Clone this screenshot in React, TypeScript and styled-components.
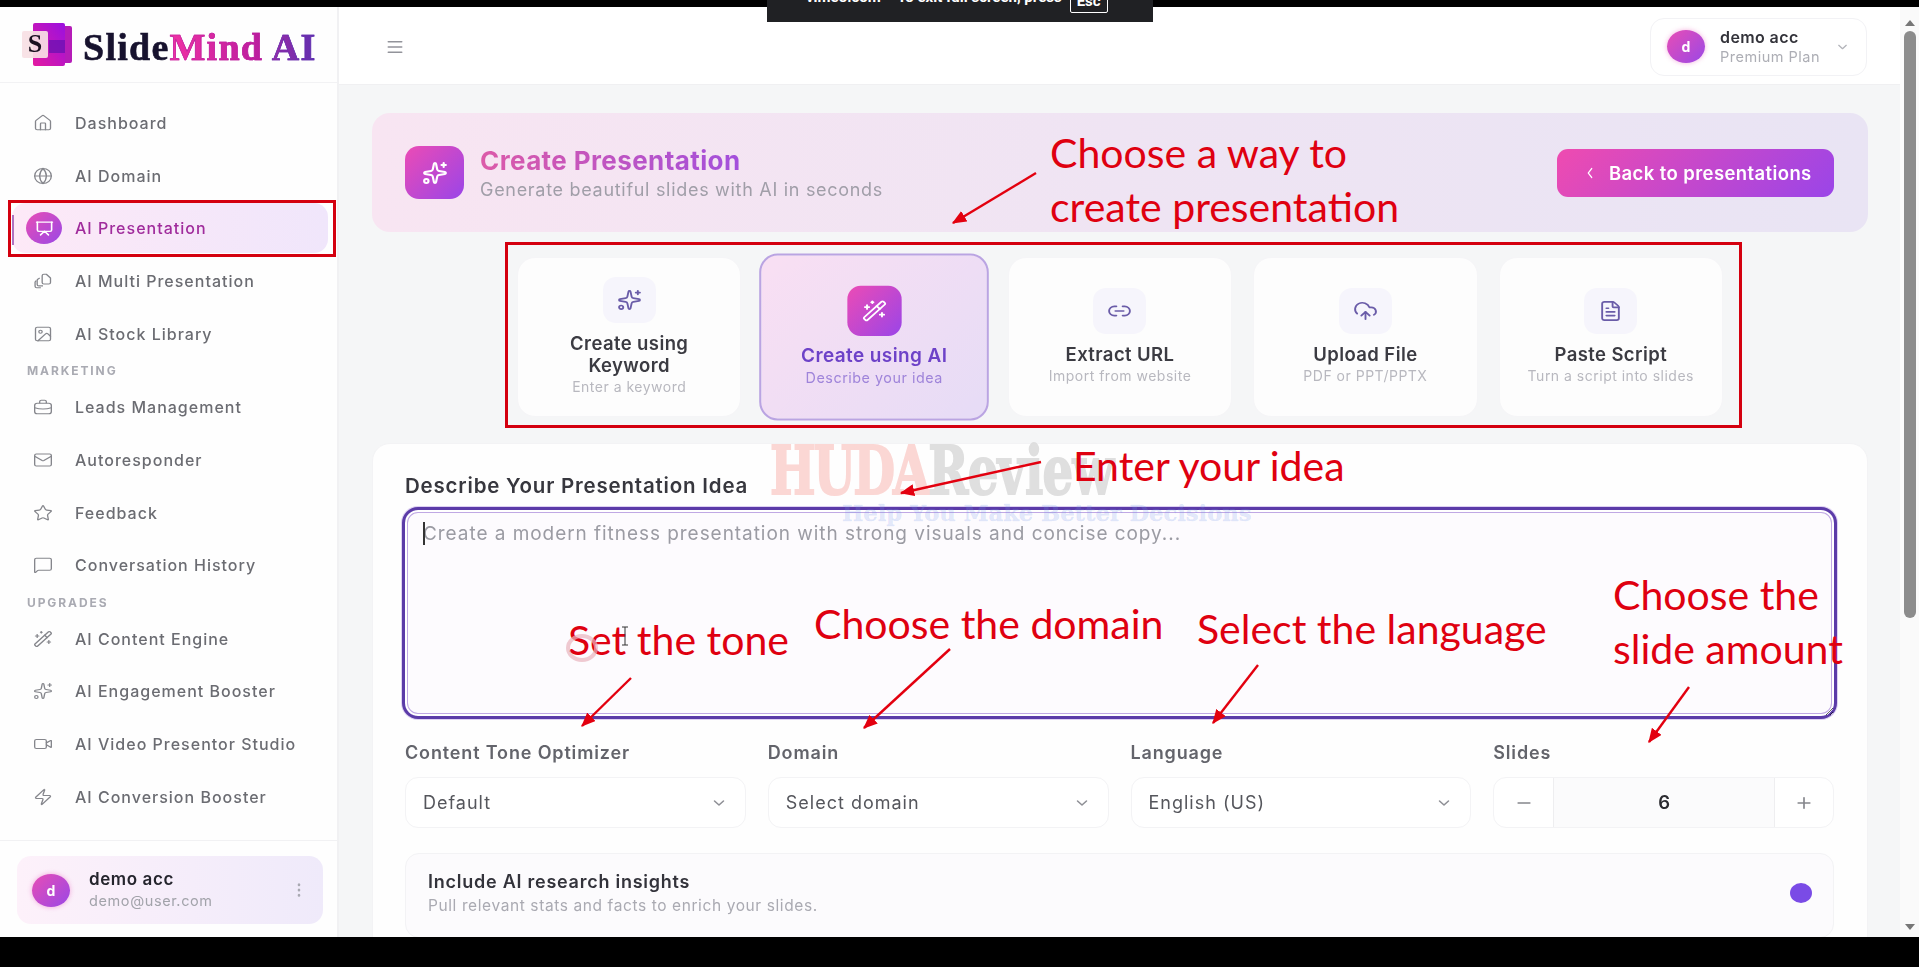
import React from "react";
import styled, { createGlobalStyle } from "styled-components";
import {
  ChevronDown,
  ChevronLeft,
  CloudUpload,
  EllipsisVertical,
  FileText,
  Globe,
  House,
  Image,
  Link2,
  Mail,
  Menu,
  MessageSquare,
  Minus,
  Plus,
  Presentation,
  Sparkles,
  Star,
  Video,
  WandSparkles,
  Zap,
} from "lucide-react";

const GlobalStyle = createGlobalStyle`
  html, body { margin: 0; padding: 0; height: 100%; overflow: hidden; background: #000; }
  * { box-sizing: border-box; }
  body { font-family: Inter, "Open Sans", sans-serif; }
  svg { display: block; }
`;

const Page = styled.div`
  position: relative;
  width: 1919px;
  height: 967px;
  background: #000;
  overflow: hidden;
`;

const Frame = styled.div`
  display: flex;
  width: 100%;
  height: 930px;
  margin-top: 7px;
  background: #fff;
  overflow: hidden;
  filter: blur(0.45px);
`;

const Sidebar = styled.aside`
  flex: 0 0 339px;
  display: flex;
  flex-direction: column;
  background: #fefefe;
  border-right: 2px solid #f1f1f3;
`;

const LogoBar = styled.div`
  height: 76px;
  flex: none;
  display: flex;
  align-items: center;
  gap: 9px;
  padding-left: 22px;
  border-bottom: 1px solid #f2f2f4;
`;

const LogoText = styled.div`
  font-family: "Liberation Serif", serif;
  font-weight: 700;
  font-size: 38px;
  letter-spacing: 1.25px;
  line-height: 1;
  margin-top: 4px;
  color: #17122e;
  white-space: nowrap;
  -webkit-text-stroke: 0.6px #17122e;
`;

const LogoAccent = styled.span<{ $from: string; $to: string }>`
  background: linear-gradient(90deg, ${(p) => p.$from}, ${(p) => p.$to});
  -webkit-background-clip: text;
  background-clip: text;
  color: transparent;
  -webkit-text-stroke: 0.6px ${(p) => p.$to};
`;

const Nav = styled.nav`
  display: flex;
  flex-direction: column;
  gap: 2.7px;
  padding: 15px 9px 0 12px;
`;

const NavItem = styled.div<{ $active?: boolean }>`
  position: relative;
  height: 50px;
  display: flex;
  align-items: center;
  padding-left: ${(p) => (p.$active ? "14px" : "21px")};
  gap: ${(p) => (p.$active ? "13px" : "22px")};
  border-radius: 14px;
  font-size: 16px;
  font-weight: 500;
  letter-spacing: 1px;
  color: ${(p) => (p.$active ? "#a02c9c" : "#6b6c72")};
  background: ${(p) =>
    p.$active ? "linear-gradient(90deg, #fde9f7 0%, #f0e6fb 100%)" : "transparent"};
  &::before {
    content: "";
    display: ${(p) => (p.$active ? "block" : "none")};
    position: absolute;
    left: 0;
    top: 12px;
    bottom: 8px;
    width: 2px;
    background: #b070c0;
  }
`;

const NavGlyph = styled.span`
  width: 20px;
  height: 18px;
  flex: none;
  color: #85868c;
  svg { width: 20px; height: 18px; stroke-width: 1.6; }
`;

const ActiveGlyph = styled.span`
  width: 36px;
  height: 32px;
  flex: none;
  display: flex;
  align-items: center;
  justify-content: center;
  border-radius: 50%;
  color: #fff;
  background: linear-gradient(135deg, #e84db5, #9a48e6);
  svg { width: 19px; height: 17px; stroke-width: 2; }
`;

const SectionLabel = styled.div`
  height: 18px;
  line-height: 20px;
  padding-left: 15px;
  font-size: 12px;
  font-weight: 700;
  letter-spacing: 1.9px;
  color: #a9aab2;
`;

const SideFooter = styled.div`
  margin-top: auto;
  border-top: 1px solid #f1f1f3;
  padding: 15px 14px 13px 17px;
`;

const SideUser = styled.div`
  height: 68px;
  display: flex;
  align-items: center;
  padding: 0 16px 0 15px;
  border-radius: 14px;
  background: linear-gradient(90deg, #fdf1fa 0%, #efeafa 100%);
`;

const Avatar = styled.div`
  width: 38px;
  height: 33px;
  flex: none;
  display: flex;
  align-items: center;
  justify-content: center;
  border-radius: 50%;
  color: #fff;
  font-size: 14px;
  font-weight: 700;
  background: linear-gradient(135deg, #e84db5, #9a48e6);
  box-shadow: 0 0 5px rgba(232, 77, 181, 0.45);
`;

const UserText = styled.div`
  flex: 1;
  margin-left: 19px;
`;

const UserName = styled.div`
  font-size: 17px;
  font-weight: 600;
  letter-spacing: 0.6px;
  line-height: 20px;
  color: #24242c;
`;

const UserMail = styled.div`
  font-size: 14.5px;
  letter-spacing: 0.6px;
  line-height: 20px;
  margin-top: 2px;
  color: #a2a3aa;
`;

const DotsGlyph = styled.span`
  color: #a9a9b2;
  svg { width: 16px; height: 18px; }
`;

const Content = styled.div`
  flex: 1;
  min-width: 0;
  display: flex;
  flex-direction: column;
  background: #f5f6f7;
`;

const Header = styled.header`
  height: 78px;
  flex: none;
  display: flex;
  align-items: center;
  justify-content: space-between;
  padding: 0 33px 0 46px;
  background: #fff;
  border-bottom: 1px solid #f0f0f2;
`;

const HeaderMenu = styled.span`
  color: #92939a;
  margin-top: 2px;
  svg { width: 20px; height: 18px; }
`;

const ProfileChip = styled.div`
  width: 217px;
  height: 58px;
  margin-top: 2px;
  display: flex;
  align-items: center;
  padding: 0 16px;
  background: #fff;
  border: 1px solid #f2f2f5;
  border-radius: 14px;
`;

const ChipText = styled.div`
  flex: 1;
  margin-left: 15px;
`;

const ChipName = styled.div`
  font-size: 16px;
  font-weight: 600;
  line-height: 20px;
  letter-spacing: 0.4px;
  color: #33333a;
`;

const ChipPlan = styled.div`
  font-size: 14.5px;
  line-height: 20px;
  letter-spacing: 0.5px;
  color: #adaeb5;
`;

const ChipArrow = styled.span`
  color: #b3b4ba;
  svg { width: 15px; height: 14px; }
`;

const Main = styled.main`
  flex: 1;
  padding: 28px 32px 0 33px;
`;

const Hero = styled.section`
  height: 119px;
  display: flex;
  align-items: center;
  justify-content: space-between;
  padding: 0 34px 0 33px;
  border-radius: 18px;
  background: linear-gradient(90deg, #f8e5f2 0%, #efe4f3 50%, #e9e4f4 100%);
`;

const HeroLeft = styled.div`
  display: flex;
  align-items: center;
  gap: 16px;
`;

const HeroIcon = styled.div`
  width: 59px;
  height: 53px;
  display: flex;
  align-items: center;
  justify-content: center;
  color: #fff;
  border-radius: 14px;
  background: linear-gradient(135deg, #ec4bb5, #9a45e8);
  svg { width: 26px; height: 24px; }
`;

const HeroTitle = styled.h1`
  margin: 2px 0 0;
  font-size: 26px;
  font-weight: 700;
  letter-spacing: 0.4px;
  line-height: 30px;
  width: max-content;
  background: linear-gradient(90deg, #dc5aa8, #a24fdc);
  -webkit-background-clip: text;
  background-clip: text;
  color: transparent;
`;

const HeroSub = styled.p`
  margin: 0;
  padding-top: 2px;
  font-size: 18px;
  letter-spacing: 0.7px;
  line-height: 24px;
  color: #a09ea8;
`;

const BackButton = styled.button`
  width: 277px;
  height: 48px;
  display: flex;
  align-items: center;
  gap: 12px;
  padding: 0 0 0 26px;
  border: 0;
  border-radius: 11px;
  color: #fff;
  font-family: inherit;
  font-size: 18.5px;
  font-weight: 600;
  letter-spacing: 0.4px;
  background: linear-gradient(135deg, #ef4bb0, #9a45e8);
  svg { width: 14px; height: 18px; }
`;

const Methods = styled.div`
  display: grid;
  grid-template-columns: repeat(5, 1fr);
  gap: 21px;
  height: 160px;
  margin: 25px 145px 0;
`;

const MethodCard = styled.div<{ $active?: boolean }>`
  display: flex;
  flex-direction: column;
  align-items: center;
  justify-content: center;
  border-radius: 18px;
  background: ${(p) =>
    p.$active ? "linear-gradient(135deg, #f9dff3 0%, #e6dcf6 100%)" : "#fdfdfd"};
  border: ${(p) => (p.$active ? "2px solid #baa4e2" : "1px solid #f5f5f7")};
  transform: ${(p) => (p.$active ? "scale(1.025, 1.045)" : "none")};
`;

const MethodTile = styled.div<{ $active?: boolean }>`
  width: 53px;
  height: ${(p) => (p.$active ? "48px" : "46px")};
  display: flex;
  align-items: center;
  justify-content: center;
  border-radius: 13px;
  color: ${(p) => (p.$active ? "#fff" : "#6a5ca8")};
  background: ${(p) =>
    p.$active ? "linear-gradient(135deg, #ec4bb5, #9a45e8)" : "#f6f5fc"};
  svg { width: 25px; height: 22px; stroke-width: 1.8; }
`;

const MethodTitle = styled.div<{ $active?: boolean }>`
  margin-top: ${(p) => (p.$active ? "7px" : "9px")};
  text-align: center;
  font-size: 18.5px;
  font-weight: 600;
  line-height: 22px;
  letter-spacing: 0.4px;
  color: ${(p) => (p.$active ? "#6d42c8" : "#3b3b42")};
`;

const MethodSub = styled.div<{ $active?: boolean }>`
  margin-top: 1px;
  text-align: center;
  font-size: 14px;
  line-height: 20px;
  letter-spacing: 0.5px;
  color: ${(p) => (p.$active ? "#9f84da" : "#b8b8bf")};
`;

const FormCard = styled.section`
  margin-top: 26px;
  height: 520px;
  padding: 30px 33px 0 32px;
  background: #fefefe;
  border-radius: 18px 18px 0 0;
  border: 1px solid #f3f3f5;
`;

const FormTitle = styled.h2`
  margin: 0;
  font-size: 20.5px;
  font-weight: 600;
  line-height: 24px;
  letter-spacing: 0.8px;
  color: #37373e;
`;

const IdeaWrap = styled.div`
  position: relative;
  margin: 9px -3px 0;
  height: 212px;
`;

const IdeaInput = styled.textarea`
  display: block;
  width: 100%;
  height: 100%;
  padding: 12px 18px;
  border: 3px solid #5b3ba8;
  border-radius: 16px;
  outline: none;
  background: #fdfbfe;
  box-shadow: 0 0 0 1px #ddd0f2, inset 0 0 0 2px #fff, inset 0 0 0 3px #c0a8e4;
  font-family: inherit;
  font-size: 19px;
  letter-spacing: 0.95px;
  line-height: 24px;
  &::placeholder { color: #9b9ba3; opacity: 1; }
`;

const Caret = styled.span`
  position: absolute;
  left: 21px;
  top: 15px;
  width: 1.5px;
  height: 23px;
  background: #333;
`;

const Fields = styled.div`
  display: grid;
  grid-template-columns: repeat(4, 1fr);
  gap: 22px;
  margin-top: 22px;
`;

const FieldLabel = styled.div`
  font-size: 18px;
  font-weight: 600;
  line-height: 24px;
  letter-spacing: 0.85px;
  color: #63646b;
`;

const SelectBox = styled.div`
  height: 51px;
  margin-top: 12px;
  display: flex;
  align-items: center;
  justify-content: space-between;
  padding: 0 17px;
  background: #fff;
  border: 1px solid #f3f3f5;
  border-radius: 13px;
  font-size: 18px;
  letter-spacing: 1px;
  line-height: 47px;
  color: #55565c;
  svg { width: 18px; height: 16px; color: #8e8f95; }
`;

const Stepper = styled.div`
  height: 51px;
  margin-top: 12px;
  display: grid;
  grid-template-columns: 59px 1fr 58px;
  border: 1px solid #f3f3f5;
  border-radius: 13px;
  overflow: hidden;
  background: #fff;
`;

const StepButton = styled.div`
  display: flex;
  align-items: center;
  justify-content: center;
  color: #85868c;
  svg { width: 20px; height: 18px; }
`;

const StepValue = styled.div`
  display: flex;
  align-items: center;
  justify-content: center;
  background: #fbfbfc;
  border-left: 1px solid #eeeef0;
  border-right: 1px solid #eeeef0;
  font-size: 18.5px;
  font-weight: 600;
  line-height: 47px;
  color: #2b2b30;
`;

const InsightRow = styled.div`
  height: 85px;
  margin-top: 25px;
  display: flex;
  align-items: center;
  justify-content: space-between;
  padding: 0 21px 4px 22px;
  background: #fcfbfd;
  border: 1px solid #f3f3f5;
  border-radius: 14px;
`;

const InsightTitle = styled.div`
  font-size: 18px;
  font-weight: 600;
  line-height: 24px;
  letter-spacing: 0.75px;
  color: #33333b;
`;

const InsightSub = styled.div`
  margin-top: 1px;
  font-size: 15.5px;
  line-height: 22px;
  letter-spacing: 0.6px;
  color: #aaaab2;
`;

const SwitchDot = styled.div`
  width: 22px;
  height: 20px;
  margin-bottom: 2px;
  border-radius: 50%;
  background: #7a4be6;
`;

const ScrollRail = styled.div`
  flex: 0 0 19px;
  display: flex;
  flex-direction: column;
  align-items: center;
  background: #fafafa;
`;

const ArrowUp = styled.div`
  margin-top: 13px;
  border-left: 5px solid transparent;
  border-right: 5px solid transparent;
  border-bottom: 6px solid #777;
`;

const ArrowDown = styled.div`
  margin-top: auto;
  margin-bottom: 7px;
  border-left: 5px solid transparent;
  border-right: 5px solid transparent;
  border-top: 6px solid #777;
`;

const Thumb = styled.div`
  width: 12px;
  height: 587px;
  margin-top: 5px;
  border-radius: 6px;
  background: #8c8c8c;
`;

const Toast = styled.div`
  position: absolute;
  left: 767px;
  top: 0;
  width: 386px;
  height: 22px;
  display: flex;
  gap: 8px;
  justify-content: flex-start;
  padding-left: 39px;
  overflow: hidden;
  background: #202124;
  color: #fff;
  font-family: Roboto, sans-serif;
  font-size: 15px;
  font-weight: 700;
  white-space: nowrap;
`;

const ToastText = styled.span`
  margin-top: -12px;
`;

const EscKey = styled.span`
  margin-top: -6px;
  height: 19px;
  padding: 0 6px;
  line-height: 12px;
  border: 1px solid #fff;
  border-radius: 2px;
`;

const Watermark = styled.div`
  position: absolute;
  left: 770px;
  top: 432px;
  font-family: "DejaVu Serif", serif;
  font-weight: 700;
  font-size: 67px;
  line-height: 78px;
  letter-spacing: -1px;
  white-space: nowrap;
  color: #dcdcdc;
  -webkit-text-stroke: 2px #dcdcdc;
  opacity: 0.9;
  transform: scaleX(0.72);
  transform-origin: left center;
  pointer-events: none;
`;

const WatermarkRed = styled.span`
  letter-spacing: -3px;
  color: #fbd3d0;
  -webkit-text-stroke: 2px #fbd3d0;
`;

const WatermarkLine = styled.div`
  position: absolute;
  left: 842px;
  top: 500px;
  font-family: "DejaVu Serif", serif;
  font-weight: 700;
  font-size: 22.6px;
  line-height: 26px;
  white-space: nowrap;
  color: rgba(115, 150, 235, 0.2);
  -webkit-text-stroke: 0.5px rgba(115, 150, 235, 0.15);
  pointer-events: none;
`;

const RedBox = styled.div<{ $x: number; $y: number; $w: number; $h: number }>`
  position: absolute;
  left: ${(p) => p.$x}px;
  top: ${(p) => p.$y}px;
  width: ${(p) => p.$w}px;
  height: ${(p) => p.$h}px;
  border: 3px solid #d4000f;
  pointer-events: none;
`;

const Note = styled.div<{ $x: number; $y: number }>`
  position: absolute;
  left: ${(p) => p.$x}px;
  top: ${(p) => p.$y}px;
  transform: translateY(-50%);
  font-family: Lato, sans-serif;
  font-size: 41px;
  line-height: 54px;
  color: #df0010;
  white-space: nowrap;
  pointer-events: none;
`;

const ArrowLayer = styled.svg`
  position: absolute;
  inset: 0;
  width: 1919px;
  height: 967px;
  pointer-events: none;
`;

const navTop = [
  { label: "Dashboard", icon: House },
  { label: "AI Domain", icon: Globe },
  { label: "AI Presentation", icon: Presentation, active: true },
  { label: "AI Multi Presentation", icon: MultiIcon },
  { label: "AI Stock Library", icon: Image },
];
const navMarketing = [
  { label: "Leads Management", icon: CaseIcon },
  { label: "Autoresponder", icon: Mail },
  { label: "Feedback", icon: Star },
  { label: "Conversation History", icon: MessageSquare },
];
const navUpgrades = [
  { label: "AI Content Engine", icon: WandSparkles },
  { label: "AI Engagement Booster", icon: Sparkles },
  { label: "AI Video Presentor Studio", icon: Video },
  { label: "AI Conversion Booster", icon: Zap },
];

const methods = [
  { title: "Create using Keyword", sub: "Enter a keyword", icon: Sparkles },
  { title: "Create using AI", sub: "Describe your idea", icon: WandSparkles, active: true },
  { title: "Extract URL", sub: "Import from website", icon: Link2 },
  { title: "Upload File", sub: "PDF or PPT/PPTX", icon: CloudUpload },
  { title: "Paste Script", sub: "Turn a script into slides", icon: FileText },
];

const arrows = [
  [1036, 173, 953, 223],
  [1041, 462, 901, 493],
  [631, 678, 582, 726],
  [950, 649, 864, 728],
  [1258, 665, 1213, 723],
  [1689, 687, 1649, 742],
];

function MultiIcon(props: React.SVGProps<SVGSVGElement>) {
  return (
    <svg viewBox="0 0 24 24" fill="none" stroke="currentColor" strokeWidth="1.6" strokeLinejoin="round" {...props}>
      <path d="M11 5a2 2 0 0 1 2-2h3l5 5v6a2 2 0 0 1-2 2h-6a2 2 0 0 1-2-2z" />
      <path d="M8 8 6 9.5a2 2 0 0 0-1 1.7v5.3a2 2 0 0 0 2 2h5" />
      <path d="M4 11.5 3 12.5a2 2 0 0 0-.5 1.3V19a2 2 0 0 0 2 2h5" />
    </svg>
  );
}

function CaseIcon(props: React.SVGProps<SVGSVGElement>) {
  return (
    <svg viewBox="0 0 24 24" fill="none" stroke="currentColor" strokeWidth="1.6" {...props}>
      <rect x="2" y="7" width="20" height="14" rx="3" />
      <path d="M8 7V5a2 2 0 0 1 2-2h4a2 2 0 0 1 2 2v2" />
      <path d="M2 13c6 2 14 2 20 0" />
    </svg>
  );
}

function LogoMark() {
  return (
    <svg width="52" height="44" viewBox="0 0 52 44">
      <defs>
        <linearGradient id="logoFront" x1="0" y1="1" x2="1" y2="0">
          <stop offset="0" stopColor="#e41aa0" />
          <stop offset="1" stopColor="#9a10e0" />
        </linearGradient>
      </defs>
      <rect x="38" y="3" width="12" height="37" rx="2" fill="#b51cb8" />
      <rect x="11" y="0" width="32" height="43" rx="2" fill="url(#logoFront)" />
      <rect x="27" y="17" width="16" height="13" fill="#6a12b0" opacity="0.75" />
      <rect x="0" y="8" width="26" height="27" rx="2" fill="#f8e0e4" opacity="0.93" />
      <text x="13" y="29" textAnchor="middle" fontFamily="Liberation Serif" fontWeight="700" fontSize="26" fill="#1a1020">
        S
      </text>
    </svg>
  );
}

function NavRow({ item }: { item: { label: string; icon: React.ElementType; active?: boolean } }) {
  const Icon = item.icon;
  return (
    <NavItem $active={item.active}>
      {item.active ? (
        <ActiveGlyph>
          <Icon preserveAspectRatio="none" />
        </ActiveGlyph>
      ) : (
        <NavGlyph>
          <Icon preserveAspectRatio="none" />
        </NavGlyph>
      )}
      {item.label}
    </NavItem>
  );
}

export default function App() {
  return (
    <Page>
      <GlobalStyle />
      <Frame>
        <Sidebar>
          <LogoBar>
            <LogoMark />
            <LogoText>
              Slide
              <LogoAccent $from="#f032a4" $to="#b91c9e">Mind</LogoAccent>{" "}
              <LogoAccent $from="#9a2ba6" $to="#5f2fb0">AI</LogoAccent>
            </LogoText>
          </LogoBar>
          <Nav>
            {navTop.map((item) => (
              <NavRow key={item.label} item={item} />
            ))}
            <SectionLabel>MARKETING</SectionLabel>
            {navMarketing.map((item) => (
              <NavRow key={item.label} item={item} />
            ))}
            <SectionLabel>UPGRADES</SectionLabel>
            {navUpgrades.map((item) => (
              <NavRow key={item.label} item={item} />
            ))}
          </Nav>
          <SideFooter>
            <SideUser>
              <Avatar>d</Avatar>
              <UserText>
                <UserName>demo acc</UserName>
                <UserMail>demo@user.com</UserMail>
              </UserText>
              <DotsGlyph>
                <EllipsisVertical preserveAspectRatio="none" />
              </DotsGlyph>
            </SideUser>
          </SideFooter>
        </Sidebar>

        <Content>
          <Header>
            <HeaderMenu>
              <Menu preserveAspectRatio="none" />
            </HeaderMenu>
            <ProfileChip>
              <Avatar>d</Avatar>
              <ChipText>
                <ChipName>demo acc</ChipName>
                <ChipPlan>Premium Plan</ChipPlan>
              </ChipText>
              <ChipArrow>
                <ChevronDown preserveAspectRatio="none" />
              </ChipArrow>
            </ProfileChip>
          </Header>

          <Main>
            <Hero>
              <HeroLeft>
                <HeroIcon>
                  <Sparkles preserveAspectRatio="none" />
                </HeroIcon>
                <div>
                  <HeroTitle>Create Presentation</HeroTitle>
                  <HeroSub>Generate beautiful slides with AI in seconds</HeroSub>
                </div>
              </HeroLeft>
              <BackButton>
                <ChevronLeft preserveAspectRatio="none" />
                Back to presentations
              </BackButton>
            </Hero>

            <Methods>
              {methods.map((m) => (
                <MethodCard key={m.title} $active={m.active}>
                  <MethodTile $active={m.active}>
                    <m.icon preserveAspectRatio="none" />
                  </MethodTile>
                  <MethodTitle $active={m.active}>
                    {m.title === "Create using Keyword" ? (
                      <>
                        Create using
                        <br />
                        Keyword
                      </>
                    ) : (
                      m.title
                    )}
                  </MethodTitle>
                  <MethodSub $active={m.active}>{m.sub}</MethodSub>
                </MethodCard>
              ))}
            </Methods>

            <FormCard>
              <FormTitle>Describe Your Presentation Idea</FormTitle>
              <IdeaWrap>
                <IdeaInput placeholder="Create a modern fitness presentation with strong visuals and concise copy..." />
                <Caret />
              </IdeaWrap>
              <Fields>
                <div>
                  <FieldLabel>Content Tone Optimizer</FieldLabel>
                  <SelectBox>
                    Default
                    <ChevronDown preserveAspectRatio="none" />
                  </SelectBox>
                </div>
                <div>
                  <FieldLabel>Domain</FieldLabel>
                  <SelectBox>
                    Select domain
                    <ChevronDown preserveAspectRatio="none" />
                  </SelectBox>
                </div>
                <div>
                  <FieldLabel>Language</FieldLabel>
                  <SelectBox>
                    English (US)
                    <ChevronDown preserveAspectRatio="none" />
                  </SelectBox>
                </div>
                <div>
                  <FieldLabel>Slides</FieldLabel>
                  <Stepper>
                    <StepButton>
                      <Minus preserveAspectRatio="none" />
                    </StepButton>
                    <StepValue>6</StepValue>
                    <StepButton>
                      <Plus preserveAspectRatio="none" />
                    </StepButton>
                  </Stepper>
                </div>
              </Fields>
              <InsightRow>
                <div>
                  <InsightTitle>Include AI research insights</InsightTitle>
                  <InsightSub>Pull relevant stats and facts to enrich your slides.</InsightSub>
                </div>
                <SwitchDot />
              </InsightRow>
            </FormCard>
          </Main>
        </Content>

        <ScrollRail>
          <ArrowUp />
          <Thumb />
          <ArrowDown />
        </ScrollRail>
      </Frame>

      <Toast>
        <ToastText>vimeo.com – To exit full screen, press</ToastText>
        <EscKey>Esc</EscKey>
      </Toast>

      <Watermark>
        <WatermarkRed>HUDA</WatermarkRed>Review
      </Watermark>
      <WatermarkLine>Help You Make Better Decisions</WatermarkLine>

      <RedBox $x={8} $y={200} $w={328} $h={57} />
      <RedBox $x={505} $y={242} $w={1237} $h={186} />

      <Note $x={1050} $y={153}>Choose a way to</Note>
      <Note $x={1050} $y={207}>create presentation</Note>
      <Note $x={1073} $y={466}>Enter your idea</Note>
      <Note $x={568} $y={640}>Set the tone</Note>
      <Note $x={814} $y={624}>Choose the domain</Note>
      <Note $x={1197} $y={629}>Select the language</Note>
      <Note $x={1613} $y={595}>Choose the</Note>
      <Note $x={1613} $y={649}>slide amount</Note>

      <ArrowLayer viewBox="0 0 1919 967">
        <defs>
          <marker id="head" markerWidth="6" markerHeight="5" refX="5.5" refY="2.5" orient="auto">
            <path d="M0 0 L6 2.5 L0 5 Z" fill="#e3000f" />
          </marker>
        </defs>
        {arrows.map(([x1, y1, x2, y2]) => (
          <line
            key={`${x1}-${y1}`}
            x1={x1}
            y1={y1}
            x2={x2}
            y2={y2}
            stroke="#e3000f"
            strokeWidth="2.4"
            markerEnd="url(#head)"
          />
        ))}
        <ellipse cx="582" cy="648" rx="14" ry="12" fill="none" stroke="#e8b4bd" strokeWidth="4" opacity="0.7" />
        <path d="M622 627h6M625 627v18M622 645h6" fill="none" stroke="#333" strokeWidth="1" />
      </ArrowLayer>
    </Page>
  );
}
